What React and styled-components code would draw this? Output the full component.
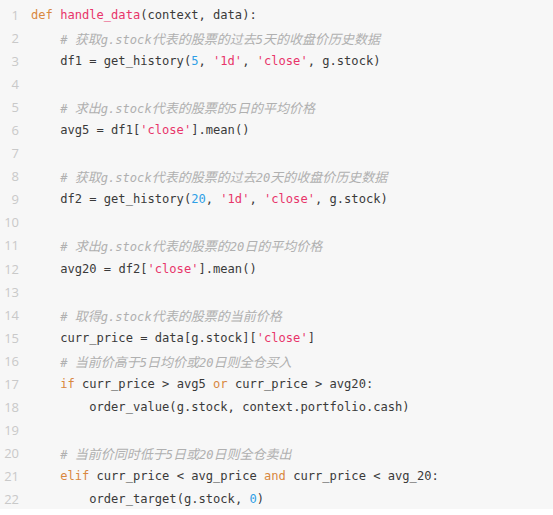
import React from "react";
import styled, { createGlobalStyle } from "styled-components";

const GlobalStyle = createGlobalStyle`
  html, body {
    margin: 0;
    padding: 0;
    background: #fff;
  }
`;

const Block = styled.div`
  width: 553px;
  height: 509px;
  box-sizing: border-box;
  padding-top: 4px;
  background: #f7f7f7;
  overflow: hidden;
`;

const Row = styled.div`
  display: flex;
  height: 23.05px;
  line-height: 23.05px;
  white-space: pre;
`;

const Num = styled.span`
  width: 19px;
  flex: none;
  text-align: right;
  font-family: "Open Sans", "Liberation Sans", sans-serif;
  font-size: 13px;
  color: #c9c9c9;
`;

const Code = styled.span`
  margin-left: 12px;
  font-family: "DejaVu Sans Mono", "Liberation Mono", monospace;
  font-size: 12.1px;
  color: #3a3a3a;
`;

const colors = {
  kw: "#d9883f",
  fn: "#e8356a",
  str: "#e8356a",
  num: "#2f9fe6",
};

const Tok = styled.span`
  color: ${(p) => colors[p.$kind] || "inherit"};
`;

const Comment = styled.span`
  font-style: italic;
  color: #b0b0b0;
`;

const Cjk = styled.span`
  font-family: "Noto Sans CJK SC", sans-serif;
  font-size: 13px;
`;

const lines = [
  "def handle_data(context, data):",
  "    # 获取g.stock代表的股票的过去5天的收盘价历史数据",
  "    df1 = get_history(5, '1d', 'close', g.stock)",
  "",
  "    # 求出g.stock代表的股票的5日的平均价格",
  "    avg5 = df1['close'].mean()",
  "",
  "    # 获取g.stock代表的股票的过去20天的收盘价历史数据",
  "    df2 = get_history(20, '1d', 'close', g.stock)",
  "",
  "    # 求出g.stock代表的股票的20日的平均价格",
  "    avg20 = df2['close'].mean()",
  "",
  "    # 取得g.stock代表的股票的当前价格",
  "    curr_price = data[g.stock]['close']",
  "    # 当前价高于5日均价或20日则全仓买入",
  "    if curr_price > avg5 or curr_price > avg20:",
  "        order_value(g.stock, context.portfolio.cash)",
  "",
  "    # 当前价同时低于5日或20日则全仓卖出",
  "    elif curr_price < avg_price and curr_price < avg_20:",
  "        order_target(g.stock, 0)",
];

const KEYWORDS = ["def", "if", "elif", "and", "or"];

function renderComment(text, key) {
  // wrap chinese runs so they get the wider CJK font size
  const parts = text.split(/([\u4e00-\u9fff]+)/);
  return (
    <Comment key={key}>
      {parts.map((p, i) =>
        /[\u4e00-\u9fff]/.test(p) ? <Cjk key={i}>{p}</Cjk> : p
      )}
    </Comment>
  );
}

function highlight(line) {
  const re = /(#.*$)|('[^']*')|(\b\d+\b)|(\w+)|(\s+)|(.)/g;
  const out = [];
  let m;
  let prev = "";
  let i = 0;
  while ((m = re.exec(line)) !== null) {
    const t = m[0];
    if (m[1]) out.push(renderComment(t, i));
    else if (m[2]) out.push(<Tok key={i} $kind="str">{t}</Tok>);
    else if (m[3]) out.push(<Tok key={i} $kind="num">{t}</Tok>);
    else if (m[4] && KEYWORDS.includes(t)) out.push(<Tok key={i} $kind="kw">{t}</Tok>);
    else if (m[4] && prev === "def") out.push(<Tok key={i} $kind="fn">{t}</Tok>);
    else out.push(t);
    if (!m[5]) prev = t;
    i++;
  }
  return out;
}

export default function App() {
  return (
    <>
      <GlobalStyle />
      <Block>
        {lines.map((line, idx) => (
          <Row key={idx}>
            <Num>{idx + 1}</Num>
            <Code>{highlight(line)}</Code>
          </Row>
        ))}
      </Block>
    </>
  );
}
